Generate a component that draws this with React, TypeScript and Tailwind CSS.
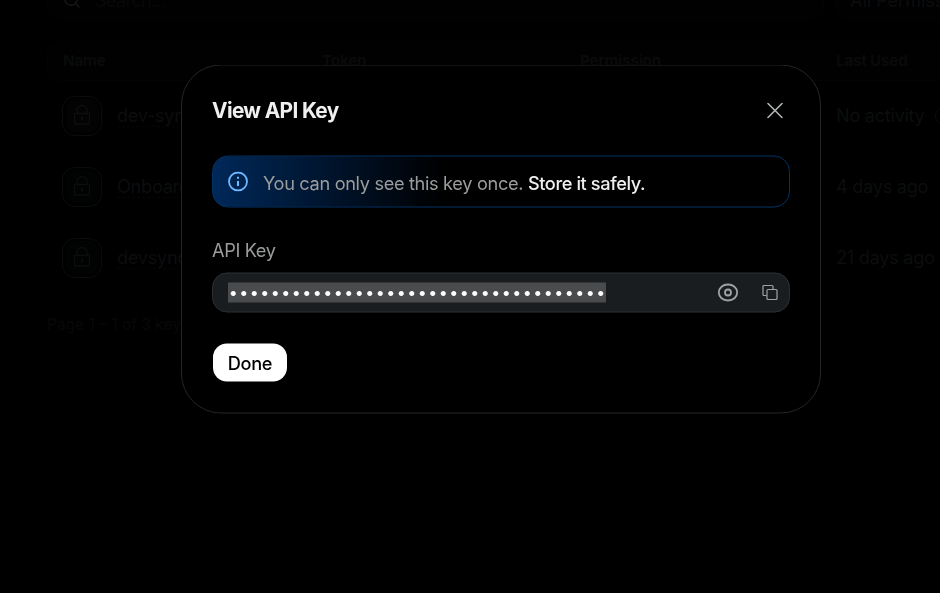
import type { ReactNode } from "react";

const rows = [
  { name: "dev-sync", used: "No activity", active: false },
  { name: "Onboard", used: "4 days ago", active: true },
  { name: "devsync", used: "21 days ago", active: true },
];

function LockTile({ active }: { active: boolean }) {
  return (
    <div className="flex h-10 w-10 shrink-0 items-center justify-center rounded-[13px] border border-[#0b0c0c]">
      <div
        className={
          "flex h-[33px] w-[33px] items-center justify-center rounded-[9px] " +
          (active ? "bg-[#010303]" : "bg-[#030303]")
        }
      >
        <svg className="mb-[2px]" width="18" height="22" viewBox="0 0 18 22" fill="none" stroke={active ? "#0a0e0d" : "#0e0f0f"} strokeWidth="1.3">
          <rect x="1.500" y="9.500" width="15" height="10.500" rx="1" />
          <path d="M4 9.500V6.500a5 5 0 0 1 10 0v3" />
          <path d="M9 12.800v3.800" strokeWidth="1.800" />
        </svg>
      </div>
    </div>
  );
}

function HeaderCell({ children }: { children: ReactNode }) {
  return <div className="text-[15.2px] font-bold tracking-[-0.2px]">{children}</div>;
}

function KeysPage() {
  return (
    <div className="w-[1095px] pl-[47px] text-[#0c0d0d]">
      <div className="-mt-5 flex h-10 gap-[11px]">
        <div className="flex w-[777px] items-center gap-[14px] rounded-[13px] border border-[#030303] bg-[#010101] pl-[15px]">
          <svg width="18" height="18" viewBox="0 0 18 18" fill="none" stroke="#161717" strokeWidth="1.4">
            <circle cx="8" cy="8" r="6.2" />
            <path d="m12.5 12.5 4 4" />
          </svg>
          <span className="text-[18px] tracking-[-0.6px] text-[#080808]">Search...</span>
        </div>
        <div className="flex w-[260px] items-center rounded-[13px] border border-[#030303] bg-[#010101] pl-[14px] text-[18px]">
          All Permissions
        </div>
      </div>
      <div className="mt-[21px] grid h-10 grid-cols-[259px_258px_256px_1fr] items-center rounded-[13px] border border-[#030303] bg-[#010101] pl-[15px] text-[#090a0a]">
        <HeaderCell>Name</HeaderCell>
        <HeaderCell>Token</HeaderCell>
        <HeaderCell>Permission</HeaderCell>
        <HeaderCell>Last Used</HeaderCell>
      </div>
      <div className="-mt-px">
        {rows.map((row) => (
          <div key={row.name} className="flex h-[71px] items-center pl-[15px] text-[18.2px] tracking-[-0.3px]">
            <LockTile active={row.active} />
            <div className="ml-[15px] w-[719px] pt-px">
              <span className="border-b border-dashed border-[#050606] leading-[22px]">{row.name}</span>
            </div>
            <span className="whitespace-nowrap pt-px">{row.used}</span>
            {!row.active && <span className="ml-[10px] h-[18px] w-[18px] rounded-full border border-[#0c0d0d]" />}
          </div>
        ))}
      </div>
      <div className="mt-[20px] text-[15.5px] text-[#080808]">Page 1 – 1 of 3 keys</div>
    </div>
  );
}

function KeyDialog() {
  return (
    <section
      role="dialog"
      className="absolute left-[181px] top-[65px] h-[349px] w-[640px] transform-[translateY(-0.5px)] rounded-[40px] border border-[#222627] bg-black px-[30px] will-change-transform"
    >
      <div className="mt-[31px] flex h-7 items-center justify-between">
        <h2 className="text-[20.8px] font-bold tracking-[-0.64px] text-[#f0f0f0]">View API Key</h2>
        <button aria-label="Close" className="mr-[7px]">
          <svg width="16" height="16" viewBox="0 0 16 16" fill="none" stroke="#b0b5b3" strokeWidth="1.6" strokeLinecap="round">
            <path d="m1 1 14 14M15 1 1 15" />
          </svg>
        </button>
      </div>

      <div className="mt-[31px] flex h-[52px] items-center rounded-[16px] border border-[#033264] bg-linear-to-r from-[#002859] to-transparent to-40% pl-[15px]">
        <svg width="20" height="20" viewBox="0 0 20 20" fill="none" stroke="#70b8ff" strokeWidth="1.8">
          <circle cx="10" cy="10" r="9" />
          <path d="M10 9.500v5" strokeWidth="2" />
          <path d="M10 5.300v2" strokeWidth="2" />
        </svg>
        <p className="ml-[15px] mt-[3px] whitespace-nowrap text-[18.2px] tracking-[-0.34px] text-[#9b9d9d]">
          You can only see this key once. <span className="font-medium tracking-[-0.4px] text-[#f0f0f0]">Store it safely.</span>
        </p>
      </div>

      <div className="mt-[29px] h-[27px] text-[18.2px] leading-[27px] tracking-[-0.38px] text-[#9b9d9d]">API Key</div>
      <div className="mt-[9px] flex h-10 items-center rounded-[15px] border border-[#2c3032] bg-[#1a1d1f] pl-[15px]">
        <div className="flex h-5 w-[378px] items-center bg-[#4a4b4c] font-['Inter'] text-[16px] leading-[18px] text-white">
          {Array.from({ length: 36 }, (_, i) => (
            <span key={i} className="flex w-[10.5px] justify-center pb-[2px]">•</span>
          ))}
        </div>
        <button aria-label="Show key" className="ml-[111px]">
          <svg width="22" height="20" viewBox="0 0 22 20" fill="none" stroke="#a0a3a3" strokeWidth="1.8">
            <path d="M1.8 10C1.8 5.4 6 2 11 2s9.2 3.4 9.2 8-4.200 8-9.200 8S1.800 14.600 1.800 10Z" />
            <circle cx="11" cy="10" r="3" />
          </svg>
        </button>
        <button aria-label="Copy key" className="ml-[23px]">
          <svg width="16" height="16" viewBox="0 0 16 16" fill="none" stroke="#a0a3a3" strokeWidth="1.2">
            <path d="M4.500 11H2a1 1 0 0 1-1-1V2a1 1 0 0 1 1-1h8a1 1 0 0 1 1 1v2.500" />
            <rect x="5" y="5" width="10" height="10" rx="1" />
          </svg>
        </button>
      </div>

      <button className="ml-px mt-[31px] flex h-[38px] w-[74px] items-center justify-center rounded-[14px] bg-white pt-[2px] text-[18.2px] font-medium tracking-[-0.3px] text-black">
        Done
      </button>
    </section>
  );
}

export default function App() {
  return (
    <main className="relative h-[593px] w-[940px] overflow-hidden bg-black font-['Inter',sans-serif]">
      <div className="flow-root">
        <KeysPage />
      </div>
      <KeyDialog />
    </main>
  );
}
